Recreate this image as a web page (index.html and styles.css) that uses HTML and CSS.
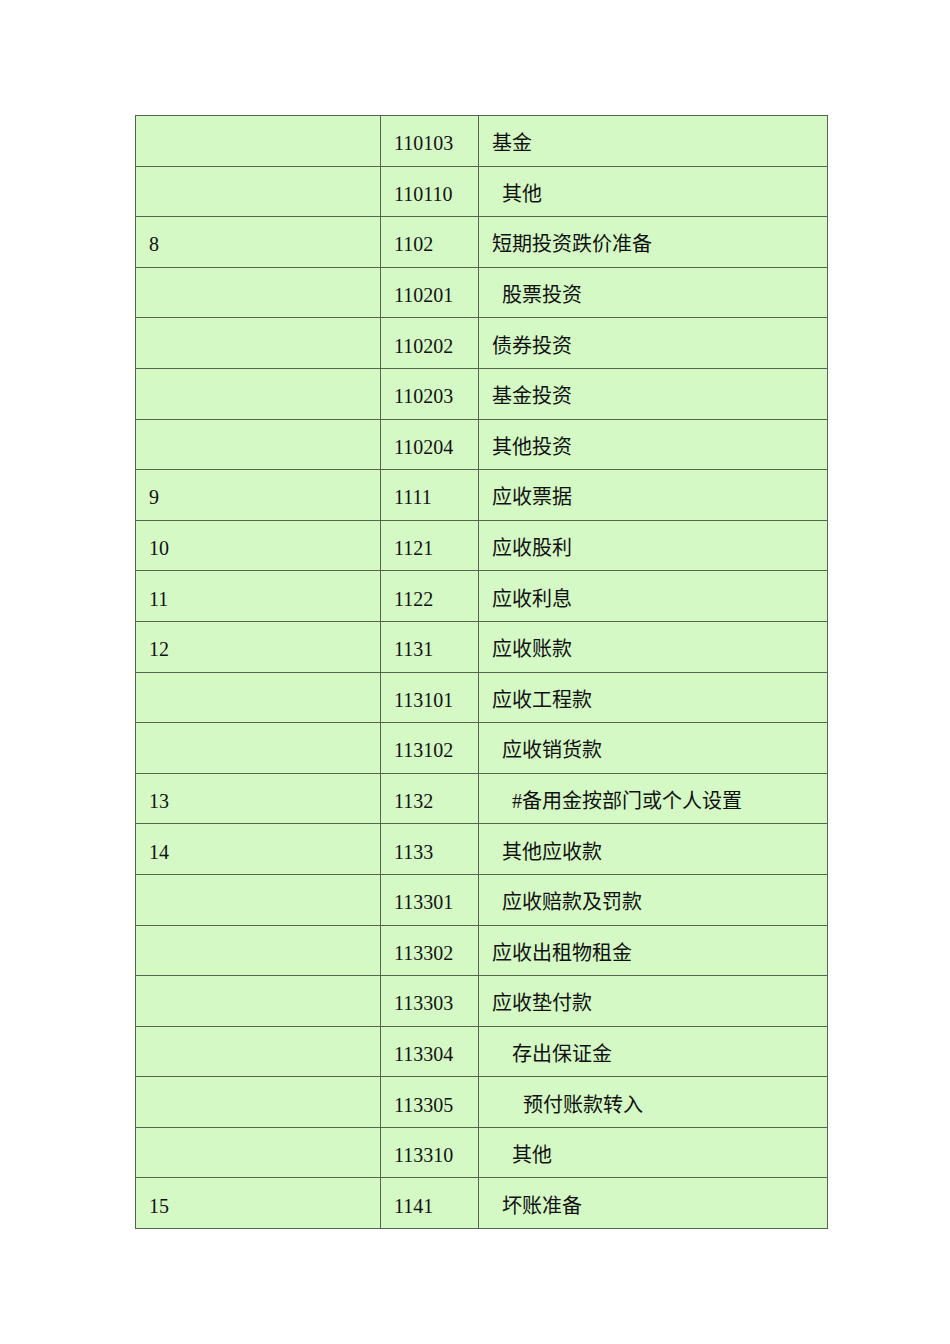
FILE: index.html
```html
<!DOCTYPE html>
<html lang="zh">
<head>
<meta charset="utf-8">
<link rel="stylesheet" href="styles.css">
</head>
<body>
<div class="page">
<table class="ledger">
<colgroup><col class="c1"><col class="c2"><col class="c3"></colgroup>
<tbody>
<tr><td></td><td>110103</td><td>基金</td></tr>
<tr><td></td><td>110110</td><td class="i1">其他</td></tr>
<tr><td>8</td><td>1102</td><td>短期投资跌价准备</td></tr>
<tr><td></td><td>110201</td><td class="i1">股票投资</td></tr>
<tr><td></td><td>110202</td><td>债券投资</td></tr>
<tr><td></td><td>110203</td><td>基金投资</td></tr>
<tr><td></td><td>110204</td><td>其他投资</td></tr>
<tr><td>9</td><td>1111</td><td>应收票据</td></tr>
<tr><td>10</td><td>1121</td><td>应收股利</td></tr>
<tr><td>11</td><td>1122</td><td>应收利息</td></tr>
<tr><td>12</td><td>1131</td><td>应收账款</td></tr>
<tr><td></td><td>113101</td><td>应收工程款</td></tr>
<tr><td></td><td>113102</td><td class="i1">应收销货款</td></tr>
<tr><td>13</td><td>1132</td><td class="i2">#备用金按部门或个人设置</td></tr>
<tr><td>14</td><td>1133</td><td class="i1">其他应收款</td></tr>
<tr><td></td><td>113301</td><td class="i1">应收赔款及罚款</td></tr>
<tr><td></td><td>113302</td><td>应收出租物租金</td></tr>
<tr><td></td><td>113303</td><td>应收垫付款</td></tr>
<tr><td></td><td>113304</td><td class="i2">存出保证金</td></tr>
<tr><td></td><td>113305</td><td class="i3">预付账款转入</td></tr>
<tr><td></td><td>113310</td><td class="i2">其他</td></tr>
<tr><td>15</td><td>1141</td><td class="i1">坏账准备</td></tr>
</tbody>
</table>
</div>
</body>
</html>
```
FILE: styles.css
```css
html, body {
  margin: 0;
  padding: 0;
  background: #ffffff;
}
.page {
  padding: 115px 0 0 135px;
}
.ledger {
  border-collapse: collapse;
  table-layout: fixed;
  width: 692px;
  background: #d4f9c5;
  font-family: "Liberation Serif", "Noto Sans CJK SC", serif;
  font-size: 20px;
  color: #111111;
}
.c1 { width: 245px; }
.c2 { width: 98px; }
.c3 { width: 349px; }
.ledger td {
  border: 1px solid #55664f;
  height: 50.6px;
  padding: 5px 0 0 13px;
  box-sizing: border-box;
  vertical-align: middle;
  white-space: nowrap;
  line-height: 20px;
}
.ledger td.i1 { padding-left: 23px; }
.ledger td.i2 { padding-left: 33px; }
.ledger td.i3 { padding-left: 44px; }
```
